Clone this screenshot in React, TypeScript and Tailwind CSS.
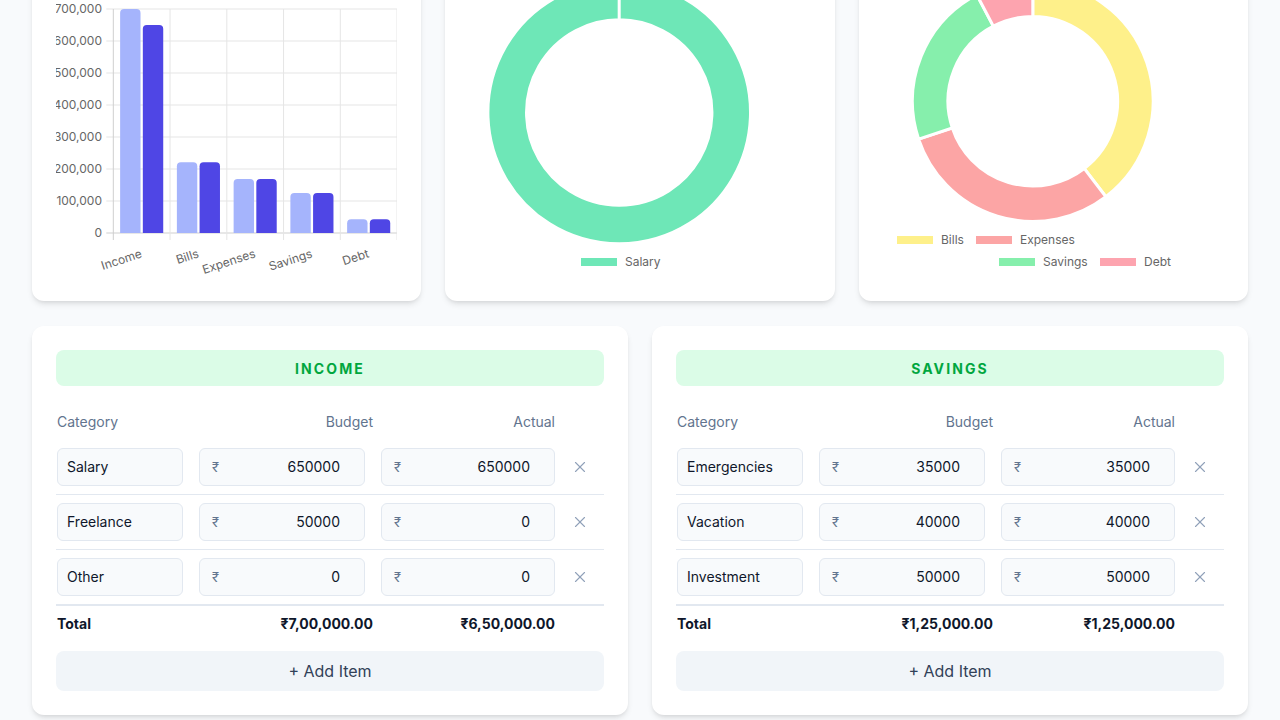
import React from 'react';
import { X } from 'lucide-react';

interface LineItem {
  name: string;
  budget: number;
  actual: number;
}

const INCOME: LineItem[] = [
  { name: 'Salary', budget: 650000, actual: 650000 },
  { name: 'Freelance', budget: 50000, actual: 0 },
  { name: 'Other', budget: 0, actual: 0 },
];

const SAVINGS: LineItem[] = [
  { name: 'Emergencies', budget: 35000, actual: 35000 },
  { name: 'Vacation', budget: 40000, actual: 40000 },
  { name: 'Investment', budget: 50000, actual: 50000 },
];

const CATEGORIES = ['Income', 'Bills', 'Expenses', 'Savings', 'Debt'];
const BUDGETS = [700000, 221000, 169000, 125000, 43000];
const ACTUALS = [650000, 221000, 169000, 125000, 43000];

// indian grouping: 7,00,000.00
const formatINR = (n: number) => {
  const [int, dec] = n.toFixed(2).split('.');
  const last3 = int.slice(-3);
  const rest = int.slice(0, -3);
  const grouped = rest ? rest.replace(/\B(?=(\d{2})+(?!\d))/g, ',') + ',' + last3 : last3;
  return `₹${grouped}.${dec}`;
};

const barPath = (x: number, y: number, w: number, h: number, r: number) => {
  const rr = Math.min(r, h / 2);
  return `M${x},${y + h} V${y + rr} Q${x},${y} ${x + rr},${y} H${x + w - rr} Q${x + w},${y} ${x + w},${y + rr} V${y + h} Z`;
};

const arcPath = (cx: number, cy: number, R: number, r: number, a0: number, a1: number) => {
  const rad = (a: number) => ((a - 90) * Math.PI) / 180;
  const pt = (rr: number, a: number) => `${cx + rr * Math.cos(rad(a))},${cy + rr * Math.sin(rad(a))}`;
  const large = a1 - a0 > 180 ? 1 : 0;
  return `M${pt(R, a0)} A${R},${R} 0 ${large} 1 ${pt(R, a1)} L${pt(r, a1)} A${r},${r} 0 ${large} 0 ${pt(r, a0)} Z`;
};

function BarChart() {
  const x0 = 57.3;
  const catW = 56.75;
  const base = 256;
  const scale = 32 / 100000;
  const barW = 20.4;

  return (
    <svg width="341" height="300" className="block overflow-hidden">
      {[0, 1, 2, 3, 4, 5, 6, 7].map(k => (
        <g key={k}>
          <line x1={x0 - 7} x2={341} y1={base - k * 32} y2={base - k * 32} stroke={k === 0 ? '#cfcfcf' : '#e5e5e5'} />
          <text x="46" y={base - k * 32 + 4} fontSize="12" fill="#666" textAnchor="end">
            {(k * 100000).toLocaleString('en-US')}
          </text>
        </g>
      ))}
      {[0, 1, 2, 3, 4, 5].map(i => (
        <line key={i} x1={x0 + i * catW} x2={x0 + i * catW} y1={32} y2={263} stroke={i === 0 ? '#cfcfcf' : '#e5e5e5'} />
      ))}

      {CATEGORIES.map((c, i) => {
        const cx = x0 + catW * (i + 0.5);
        const hb = BUDGETS[i] * scale;
        const ha = ACTUALS[i] * scale;
        return (
          <g key={c}>
            <path d={barPath(cx - 21.55, base - hb, barW, hb, 4)} fill="#a5b4fc" />
            <path d={barPath(cx + 1.15, base - ha, barW, ha, 4)} fill="#4f46e5" />
            <text
              transform={`translate(${cx + 1},280) rotate(-18)`}
              fontSize="12"
              fill="#666"
              textAnchor="end"
            >
              {c}
            </text>
          </g>
        );
      })}
    </svg>
  );
}

function SalaryDonut() {
  return (
    <svg width="342" height="300" className="block overflow-hidden">
      <path d={arcPath(150.2, 135.5, 131.3, 92.7, 0, 359.99)} fill="#6ee7b7" stroke="#fff" strokeWidth="3" />
      <rect x="112" y="281" width="36" height="8" fill="#6ee7b7" />
      <text x="156" y="289" fontSize="12" fill="#666">Salary</text>
    </svg>
  );
}

function ExpenseDonut() {
  const values = [221000, 169000, 125000, 43000];
  const colors = ['#fef08a', '#fca5a5', '#86efac', '#fda4af'];
  const total = values.reduce((a, b) => a + b, 0);
  let acc = 0;
  const legend = [
    { label: 'Bills', color: colors[0], x: 14, y: 263 },
    { label: 'Expenses', color: colors[1], x: 93, y: 263 },
    { label: 'Savings', color: colors[2], x: 116, y: 285 },
    { label: 'Debt', color: colors[3], x: 217, y: 285 },
  ];

  return (
    <svg width="341" height="300" className="block overflow-hidden">
      {values.map((v, i) => {
        const a0 = (acc / total) * 360;
        acc += v;
        const a1 = (acc / total) * 360;
        return <path key={i} d={arcPath(149.8, 124.2, 120.3, 84.8, a0, a1)} fill={colors[i]} stroke="#fff" strokeWidth="3" />;
      })}
      {legend.map(l => (
        <g key={l.label}>
          <rect x={l.x} y={l.y - 4} width="36" height="8" fill={l.color} />
          <text x={l.x + 44} y={l.y + 4} fontSize="12" fill="#666">{l.label}</text>
        </g>
      ))}
    </svg>
  );
}

// top row cards are scrolled partly out of view, so only the chart bottoms show
function ChartCard({ children }: { children: React.ReactNode }) {
  return (
    <div className="h-[420px] bg-white rounded-xl shadow-md p-6 flex flex-col justify-end">
      {children}
    </div>
  );
}

function MoneyInput({ value }: { value: number }) {
  return (
    <div className="h-[38px] flex items-center rounded-md border border-slate-200 bg-slate-50 pl-3 pr-6 text-sm">
      <span className="text-slate-500 text-[13px]">₹</span>
      <input
        type="text"
        readOnly
        value={String(value)}
        className="flex-1 min-w-0 bg-transparent text-right text-slate-900 outline-none"
      />
    </div>
  );
}

function BudgetTable({ title, items }: { title: string; items: LineItem[] }) {
  const totalBudget = items.reduce((s, i) => s + i.budget, 0);
  const totalActual = items.reduce((s, i) => s + i.actual, 0);

  return (
    <div className="bg-white rounded-xl shadow-md p-6">
      <div className="h-9 pt-px rounded-lg bg-green-100 flex items-center justify-center text-sm font-bold tracking-[0.15em] text-green-600 uppercase">
        {title}
      </div>

      <div className="mt-[26px] pb-2 grid grid-cols-[135px_182px_182px_49px] text-sm text-slate-500 leading-5">
        <div className="pl-px">Category</div>
        <div className="text-right">Budget</div>
        <div className="text-right">Actual</div>
        <div />
      </div>

      {items.map((item, idx) => (
        <div
          key={item.name}
          className={`grid grid-cols-[135px_182px_182px_49px] items-center py-2 ${idx < items.length - 1 ? 'border-b border-slate-200' : ''}`}
        >
          <div className="pl-px pr-2">
            <div className="h-[38px] flex items-center rounded-md border border-slate-200 bg-slate-50 px-[9px] text-sm text-slate-900">
              {item.name}
            </div>
          </div>
          <div className="px-2">
            <MoneyInput value={item.budget} />
          </div>
          <div className="pl-2">
            <MoneyInput value={item.actual} />
          </div>
          <div className="flex justify-center text-slate-400">
            <X size={18} strokeWidth={1.5} />
          </div>
        </div>
      ))}

      <div className="grid grid-cols-[135px_182px_182px_49px] border-t-2 border-slate-200 py-2 text-sm font-bold text-slate-900 leading-5">
        <div className="pl-px">Total</div>
        <div className="text-right">{formatINR(totalBudget)}</div>
        <div className="text-right">{formatINR(totalActual)}</div>
        <div />
      </div>

      <button className="mt-[9px] h-10 w-full rounded-lg bg-slate-100 text-base text-slate-700">
        + Add Item
      </button>
    </div>
  );
}

export default function App() {
  return (
    <div className="h-[720px] overflow-hidden bg-slate-50 font-['Inter',sans-serif]">
      <div className="-mt-[119px] px-8">
        <div className="grid grid-cols-3 gap-6">
          <ChartCard>
            <BarChart />
          </ChartCard>
          <ChartCard>
            <SalaryDonut />
          </ChartCard>
          <ChartCard>
            <ExpenseDonut />
          </ChartCard>
        </div>

        <div className="mt-[25px] grid grid-cols-2 gap-6">
          <BudgetTable title="Income" items={INCOME} />
          <BudgetTable title="Savings" items={SAVINGS} />
        </div>
      </div>
    </div>
  );
}
